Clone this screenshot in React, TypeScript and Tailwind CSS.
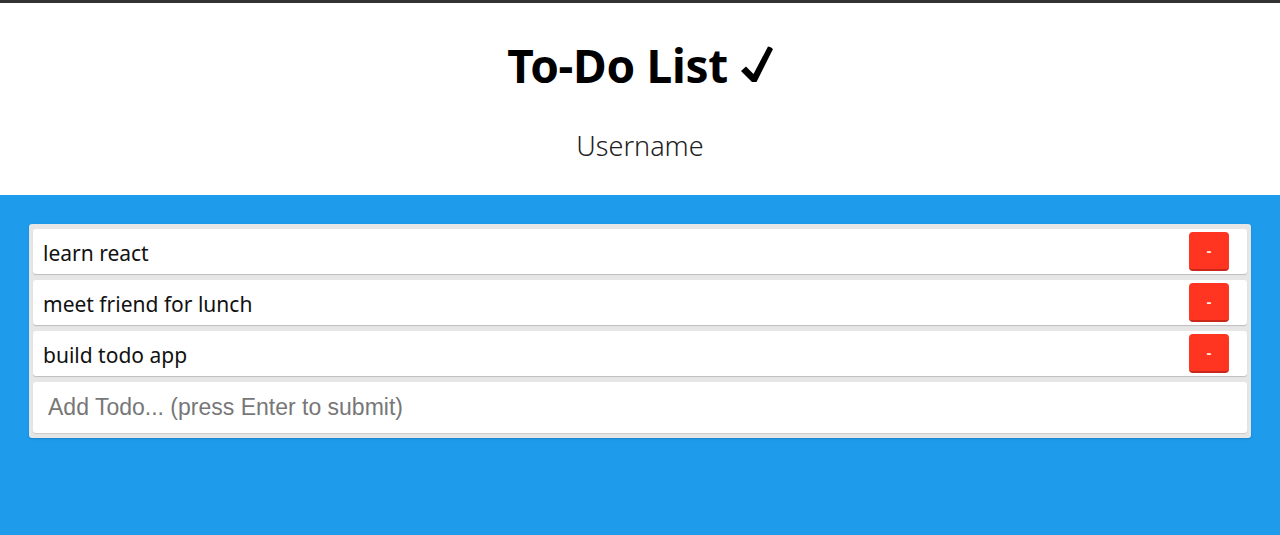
import { useState } from 'react';

const initialTodos = ['learn react', 'meet friend for lunch', 'build todo app'];

export default function App() {
  const [todos, setTodos] = useState(initialTodos);
  const [text, setText] = useState('');

  const removeTodo = (index: number) => {
    setTodos(todos.filter((_, i) => i !== index));
  };

  return (
    <div className="min-h-[535px] flex flex-col bg-[#1f9bec] font-['Noto_Sans','Open_Sans',sans-serif]">
      {/* header */}
      <header className="bg-white border-t-[3px] border-[#333] h-[195px] flex flex-col items-center">
        <h1 className="mt-[31px] text-[46px] leading-[62px] font-bold text-black tracking-[-0.3px] flex items-end">
          <span>To-Do List</span>
          <svg viewBox="0 0 32 36" className="w-[32px] h-[36px] ml-[13px] mb-[14px]">
            <path d="M0 25 L5 20.5 L12.5 28 L27 0.5 Q30 0.5 32 3 L15.5 36 L11 36 Z" fill="#000" />
          </svg>
        </h1>
        <p className="mt-[30px] text-[27px] leading-[40px] font-light text-[#222]">Username</p>
      </header>

      <main className="px-[29px] pt-[29px]">
        <div className="bg-[#e6e6e6] rounded-[3px] px-[4px] pt-[5px] pb-[5px] flex flex-col gap-[6px] shadow-[0_1px_2px_rgba(0,0,0,0.15)]">
          {todos.map((todo, i) => (
            <div
              key={todo}
              className="bg-white h-[45px] rounded-[3px] flex items-center justify-between pl-[10px] pr-[18px] shadow-[0_1px_1px_rgba(0,0,0,0.18)]"
            >
              <span className="text-[21px] text-[#111] pt-[4px]">{todo}</span>
              <button
                onClick={() => removeTodo(i)}
                className="w-[40px] h-[39px] rounded-[4px] bg-[#ff3421] border-b-2 border-[#c8281a] text-[#fff3e0] text-[15px] font-bold leading-none font-['Liberation_Sans',sans-serif]"
              >
                -
              </button>
            </div>
          ))}
          <input
            value={text}
            onChange={(e) => setText(e.target.value)}
            onKeyDown={(e) => {
              if (e.key === 'Enter' && text.trim()) {
                setTodos([...todos, text.trim()]);
                setText('');
              }
            }}
            placeholder="Add Todo... (press Enter to submit)"
            className="bg-white h-[51px] rounded-[3px] px-[15px] text-[23px] text-[#222] placeholder:text-[#777] outline-none font-['Liberation_Sans',sans-serif] shadow-[0_1px_1px_rgba(0,0,0,0.12)]"
          />
        </div>
      </main>
    </div>
  );
}
